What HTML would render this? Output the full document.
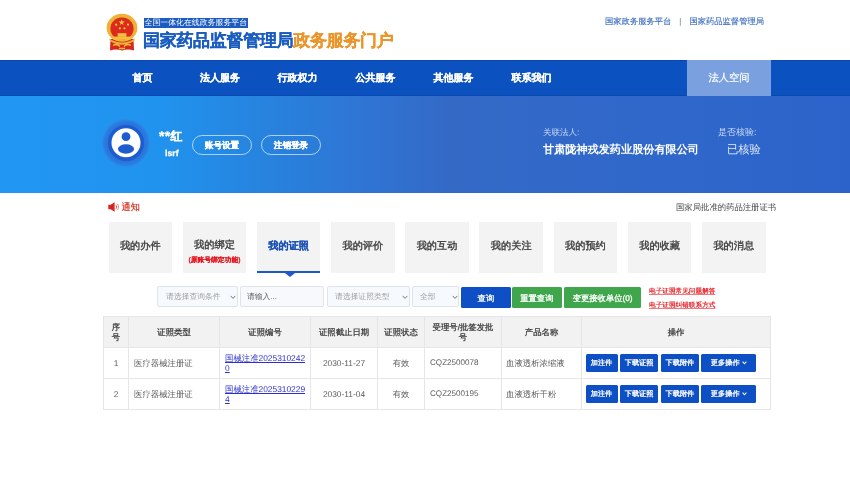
<!DOCTYPE html>
<html><head><meta charset="utf-8">
<style>
*{box-sizing:border-box;margin:0;padding:0}
html,body{width:850px;height:480px;overflow:hidden;background:#fff;font-family:"Liberation Sans",sans-serif;text-rendering:geometricPrecision}
.abs{position:absolute;white-space:nowrap}
#hdr{position:absolute;left:0;top:0;width:850px;height:60px;background:#fff}
#nav{position:absolute;left:0;top:60px;width:850px;height:36px;background:#0b51bf}
#nav .it{position:absolute;top:1.2px;height:36px;line-height:36px;color:#fff;font-size:10px;font-weight:bold;text-align:center;width:78px;-webkit-text-stroke:0.2px #fff}
#nav .act{position:absolute;left:687px;top:0;width:84px;height:36px;background:#7aa0df;color:#fff;font-size:10.3px;line-height:37px;text-align:center;-webkit-text-stroke:0.2px #fff}
#ban{position:absolute;left:0;top:96px;width:850px;height:97px;background:linear-gradient(90deg,#2196f3 0px,#2093ee 160px,#2685e0 250px,#2f75d4 360px,#3469c6 450px,#3068ca 630px,#2c63ca 850px)}
.pill{position:absolute;top:135px;height:20px;border:1px solid rgba(255,255,255,0.62);border-radius:10px;color:#fff;font-size:8.6px;font-weight:bold;line-height:18px;-webkit-text-stroke:0.25px #fff;text-align:center}
.card{position:absolute;top:222px;width:63.5px;height:51px;background:#f3f3f3;color:#3c3c3c;font-size:10.2px;font-weight:normal;-webkit-text-stroke:0.35px #3c3c3c;text-align:center;line-height:49px}
.sel{position:absolute;top:286px;height:20.5px;background:#f6f9fd;border:1px solid #dfe4ea;border-radius:2px;color:#a0a0a0;font-size:7.8px;line-height:19px;padding-left:8px}
.chev{position:absolute;top:8px;width:6px;height:4.5px}
.btn{position:absolute;top:286.5px;height:21.2px;border-radius:1.5px;color:#fff;font-size:8.3px;font-weight:normal;line-height:22.5px;text-align:center;-webkit-text-stroke:0.3px #fff}
table{position:absolute;left:103px;top:316px;border-collapse:collapse;table-layout:fixed}
td,th{border:1px solid #e6e6e6;font-size:8.4px;color:#5c5c5c;font-weight:normal;padding:0 5px}
th{background:#f2f2f2;color:#3a3a3a;font-weight:normal;-webkit-text-stroke:0.25px #3a3a3a;height:31px;text-align:center;line-height:10px}
td{height:31px;line-height:10.5px}
.c{text-align:center}
a.ln{color:#2a2fd0;text-decoration:underline}
.ob{display:inline-block;height:17.5px;line-height:17.5px;background:#0d4fc4;color:#fff;font-size:7.2px;font-weight:normal;-webkit-text-stroke:0.3px #fff;text-align:center;border-radius:1.5px;vertical-align:middle}
#root{position:absolute;left:0;top:0;width:850px;height:480px;background:#fff;will-change:transform}
</style></head><body><div id="root">
<div id="hdr">
  <!-- emblem -->
  <svg class="abs" style="left:102px;top:10px" width="40" height="44" viewBox="0 0 40 44">
    <path d="M8.5 29 L31.5 29 L32 40.5 Q26 38.6 20 40.6 Q14 38.6 8 40.5Z" fill="#d9261c"/>
    <ellipse cx="20" cy="17.8" rx="15.4" ry="14" fill="#efb236"/>
    <ellipse cx="20" cy="18.6" rx="11.6" ry="11.2" fill="#dc2a1e"/>
    <rect x="15.6" y="23.2" width="8.8" height="3.6" fill="#f3c040"/>
    <rect x="11.5" y="26.6" width="17" height="3.2" fill="#f3c040"/>
    <path d="M7 28.5 Q20 36.5 33 28.5 L32 31 Q20 38.5 8 31Z" fill="#efb236"/>
    <path d="M11 35.5 Q15 33 18 36.5 M22 36.5 Q25 33 29 35.5 M17 38.5 L23 38.5" stroke="#f3c040" stroke-width="1.3" fill="none"/>
    <polygon points="19.7,9.3 20.5,11.5 22.8,11.5 20.9,12.9 21.6,15.1 19.7,13.7 17.8,15.1 18.5,12.9 16.6,11.5 18.9,11.5" fill="#f7cc3a"/>
    <circle cx="14.2" cy="14.7" r="1.1" fill="#f7cc3a"/><circle cx="26" cy="14.7" r="1.1" fill="#f7cc3a"/>
    <circle cx="17.9" cy="18.3" r="1.1" fill="#f7cc3a"/><circle cx="22.5" cy="18.3" r="1.1" fill="#f7cc3a"/>
  </svg>
  <div class="abs" style="left:144px;top:18px;width:104px;height:10px;background:#1c5cc0;color:#fff;font-size:7.9px;line-height:10px;padding-left:0.5px">全国一体化在线政务服务平台</div>
  <div class="abs" style="left:143px;top:29px;font-size:17px;line-height:24px;font-weight:bold;color:#1a5cc0;letter-spacing:-0.3px;-webkit-text-stroke:0.2px #1a5cc0">国家药品监督管理局<span style="color:#ea952a;-webkit-text-stroke:0.2px #ea952a">政务服务门户</span></div>
  <div class="abs" style="left:605px;top:15px;font-size:8.3px;line-height:12px;color:#3a6cc2;-webkit-text-stroke:0.12px #3a6cc2">国家政务服务平台<span style="display:inline-block;width:18px;text-align:center;color:#8aa">|</span>国家药品监督管理局</div>
</div>
<div id="nav"><div style="position:absolute;left:0;top:0;width:850px;height:1px;background:#0a48b2"></div><div style="position:absolute;left:0;top:35px;width:850px;height:1px;background:#0a4aae"></div>
  <div class="it" style="left:103.5px">首页</div>
  <div class="it" style="left:181px">法人服务</div>
  <div class="it" style="left:258.5px">行政权力</div>
  <div class="it" style="left:336.5px">公共服务</div>
  <div class="it" style="left:414.5px">其他服务</div>
  <div class="it" style="left:492.5px">联系我们</div>
  <div class="act">法人空间</div>
</div>
<div id="ban">
  <svg class="abs" style="left:102px;top:22px" width="48" height="50" viewBox="0 0 48 50" overflow="visible">
    <defs><radialGradient id="halo"><stop offset="0.7" stop-color="#2670d8"/><stop offset="0.9" stop-color="#2a7ce0"/><stop offset="1" stop-color="#2c8ce9"/></radialGradient></defs><circle cx="24" cy="25" r="24" fill="url(#halo)"/>
    <circle cx="24" cy="25" r="18" fill="#1d5ccf"/>
    <circle cx="24" cy="24.7" r="14.5" fill="#fff"/>
    <circle cx="24" cy="18.7" r="4.4" fill="#1d5ccf"/>
    <ellipse cx="24" cy="31" rx="8.1" ry="4.7" fill="#1d5ccf"/>
  </svg>
  <div class="abs" style="left:159px;top:31px;font-size:11.8px;line-height:16px;font-weight:bold;color:#fff;-webkit-text-stroke:0.3px #fff"><span style="font-size:14px;letter-spacing:0.3px;position:relative;top:0.5px">**</span>红</div>
  <div class="abs" style="left:165px;top:51.3px;font-size:8.7px;line-height:12px;font-weight:bold;color:#fff;-webkit-text-stroke:0.3px #fff">lsrf</div>
</div>
<div class="pill" style="left:192px;width:60px">账号设置</div>
<div class="pill" style="left:261px;width:60px">注销登录</div>
<div class="abs" style="left:543px;top:126px;font-size:8.5px;line-height:12px;color:#cfdcf5">关联法人:</div>
<div class="abs" style="left:543px;top:142.5px;font-size:11.15px;line-height:15px;font-weight:bold;color:#fff">甘肃陇神戎发药业股份有限公司</div>
<div class="abs" style="left:718px;top:126px;font-size:9px;line-height:12px;color:#cfdcf5">是否核验:</div>
<div class="abs" style="left:727px;top:142.5px;font-size:11.3px;line-height:15px;color:#e4ecfa">已核验</div>

<!-- notice -->
<svg class="abs" style="left:108px;top:202px" width="13" height="10" viewBox="0 0 13 10">
  <path d="M0.3 2.8 L2.6 2.8 L6.6 0.2 L6.6 9.8 L2.6 7.2 L0.3 7.2Z" fill="#d8241c"/>
  <path d="M8 3.2 Q9.2 5 8 6.8" stroke="#e4574c" stroke-width="1" fill="none"/>
  <path d="M9.6 1.8 Q11.6 5 9.6 8.2" stroke="#ee8c84" stroke-width="1" fill="none"/>
</svg>
<div class="abs" style="left:121.5px;top:201px;font-size:9.2px;line-height:13px;color:#d8301e;font-weight:normal;-webkit-text-stroke:0.2px #d8301e">通知</div>
<div class="abs" style="left:676px;top:200.5px;font-size:8.35px;line-height:13px;color:#444">国家局批准的药品注册证书</div>

<div class="card" style="left:108.50px">我的办件</div>
<div class="card" style="left:182.69px;line-height:normal"><div style="position:absolute;left:0;right:0;top:17.8px;line-height:12px">我的绑定</div><div style="position:absolute;left:0;right:0;top:35px;font-size:6.8px;line-height:8px;color:#e8141e;font-weight:bold;-webkit-text-stroke:0.1px #e8141e">(原账号绑定功能)</div></div>
<div class="card" style="left:256.88px;color:#1c52b4;font-weight:bold;-webkit-text-stroke:0.2px #1c52b4;height:49px;line-height:49px">我的证照</div>
<div class="abs" style="left:256.88px;top:271px;width:63.5px;height:2.2px;background:#1c58c8"></div>
<div class="abs" style="left:285px;top:273px;width:0;height:0;border-left:5.5px solid transparent;border-right:5.5px solid transparent;border-top:4px solid #1c58c8"></div>
<div class="card" style="left:331.07px">我的评价</div>
<div class="card" style="left:405.26px">我的互动</div>
<div class="card" style="left:479.45px">我的关注</div>
<div class="card" style="left:553.64px">我的预约</div>
<div class="card" style="left:627.83px">我的收藏</div>
<div class="card" style="left:702.02px">我的消息</div>

<!-- search -->
<div class="sel" style="left:157px;width:80.5px">请选择查询条件<svg class="chev" style="left:72px" viewBox="0 0 6 4.5"><path d="M0.7 0.9 L3 3.4 L5.3 0.9" stroke="#777" stroke-width="1" fill="none"/></svg></div>
<div class="sel" style="left:240px;width:83.5px;background:#f7f9fc;color:#5a5a5a;padding-left:6px">请输入...</div>
<div class="sel" style="left:327px;width:82.5px;padding-left:7px">请选择证照类型<svg class="chev" style="left:74px" viewBox="0 0 6 4.5"><path d="M0.7 0.9 L3 3.4 L5.3 0.9" stroke="#777" stroke-width="1" fill="none"/></svg></div>
<div class="sel" style="left:412px;width:46.5px;padding-left:7px">全部<svg class="chev" style="left:39px" viewBox="0 0 6 4.5"><path d="M0.7 0.9 L3 3.4 L5.3 0.9" stroke="#777" stroke-width="1" fill="none"/></svg></div>
<div class="btn" style="left:460.8px;width:50.2px;background:#0f4fc6">查询</div>
<div class="btn" style="left:512px;width:49.7px;background:#3fa64b">重置查询</div>
<div class="btn" style="left:564px;width:77.3px;background:#3fa64b">变更接收单位(0)</div>
<div class="abs" style="left:649px;top:287px;font-size:6.65px;line-height:9px;color:#e6282e;text-decoration:underline;text-decoration-color:#f07a7e;font-weight:bold">电子证照常见问题解答</div>
<div class="abs" style="left:649px;top:301px;font-size:6.65px;line-height:9px;color:#e6282e;text-decoration:underline;text-decoration-color:#f07a7e;font-weight:bold">电子证照纠错联系方式</div>

<table>
<colgroup><col style="width:25px"><col style="width:91px"><col style="width:91px"><col style="width:67px"><col style="width:47px"><col style="width:77px"><col style="width:80px"><col style="width:189px"></colgroup>
<tr><th>序<br>号</th><th>证照类型</th><th>证照编号</th><th>证照截止日期</th><th>证照状态</th><th>受理号/批签发批<br>号</th><th>产品名称</th><th>操作</th></tr>
<tr><td class="c">1</td><td>医疗器械注册证</td><td style="padding-right:3px"><a class="ln">国械注准2025310242<br>0</a></td><td class="c">2030-11-27</td><td class="c">有效</td><td style="font-size:8.1px">CQZ2500078</td><td style="padding-left:4px">血液透析浓缩液</td><td style="padding-left:3.5px"><span class="ob" style="width:32px">加注件</span> <span class="ob" style="width:38.5px">下载证照</span> <span class="ob" style="width:38.5px">下载附件</span> <span class="ob" style="width:55px">更多操作<svg style="margin-left:2.5px;vertical-align:0px" width="5" height="4" viewBox="0 0 5 4"><path d="M0.6 0.7 L2.5 2.8 L4.4 0.7" stroke="#fff" stroke-width="1.1" fill="none"/></svg></span></td></tr>
<tr><td class="c">2</td><td>医疗器械注册证</td><td style="padding-right:3px"><a class="ln">国械注准2025310229<br>4</a></td><td class="c">2030-11-04</td><td class="c">有效</td><td style="font-size:8.1px">CQZ2500195</td><td style="padding-left:4px">血液透析干粉</td><td style="padding-left:3.5px"><span class="ob" style="width:32px">加注件</span> <span class="ob" style="width:38.5px">下载证照</span> <span class="ob" style="width:38.5px">下载附件</span> <span class="ob" style="width:55px">更多操作<svg style="margin-left:2.5px;vertical-align:0px" width="5" height="4" viewBox="0 0 5 4"><path d="M0.6 0.7 L2.5 2.8 L4.4 0.7" stroke="#fff" stroke-width="1.1" fill="none"/></svg></span></td></tr>
</table>
</div></body></html>
